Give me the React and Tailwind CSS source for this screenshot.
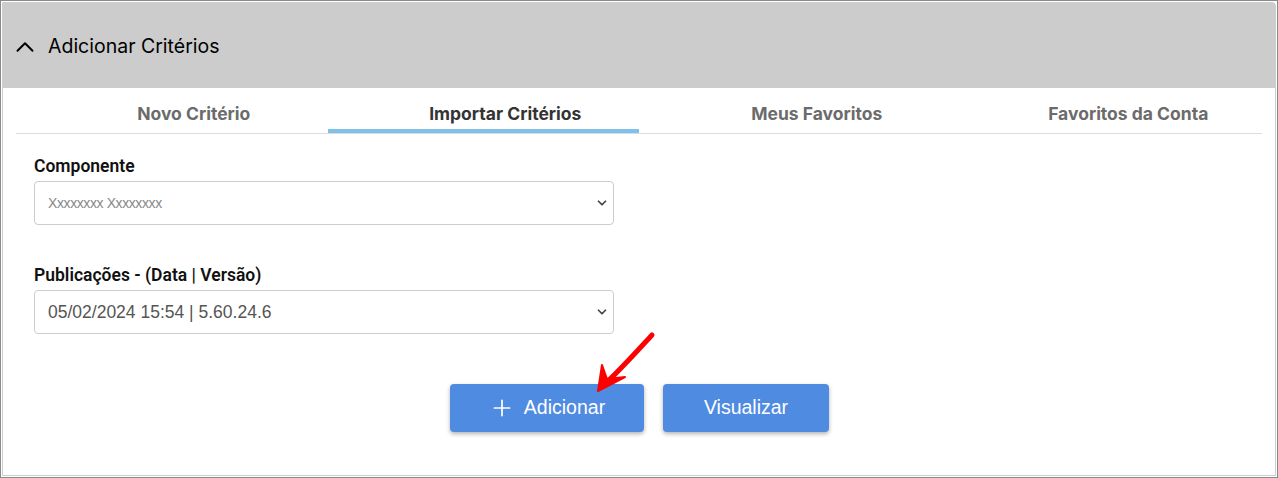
import { ChevronDown, ChevronUp, Plus } from 'lucide-react'

const tabs = [
  { label: 'Novo Critério' },
  { label: 'Importar Critérios', active: true },
  { label: 'Meus Favoritos' },
  { label: 'Favoritos da Conta' },
]

function Field({ label, value, placeholder }) {
  return (
    <div className="flex flex-col">
      <label className="h-[22px] text-[17.5px] leading-[22px] font-semibold text-[#111] font-['Roboto',sans-serif]">{label}</label>
      <div className="mt-[4px] flex h-[44px] w-[580px] items-center justify-between rounded-[4px] border border-[#cccccc] bg-white pl-[13px] pr-[4px]">
        {placeholder ? (
          <span className="text-[14px] tracking-[-0.4px] text-[#888] font-['Liberation_Sans',Arial,sans-serif]">{placeholder}</span>
        ) : (
          <span className="text-[17.5px] text-[#555] font-['Liberation_Sans',Arial,sans-serif]">{value}</span>
        )}
        <ChevronDown size={14} strokeWidth={3} className="text-[#444]" />
      </div>
    </div>
  )
}

export default function App() {
  return (
    <div className="relative h-[478px] w-[1278px] border border-[#8a8a8a] bg-white p-px">
      <div className="flex h-full flex-col rounded-tr-[4px] border border-[#cdcdcd] bg-white">
        <div className="flex h-[85px] items-center gap-[8px] bg-[#cccccc] pl-[7px] pt-[2px] font-['Inter',sans-serif]">
          <ChevronUp size={30} strokeWidth={1.6} className="text-black" />
          <span className="text-[19.5px] text-black">Adicionar Critérios</span>
        </div>

        <div className="mx-[13px] flex border-b border-[#dcdcdc] font-['Inter',sans-serif]">
          {tabs.map((tab) => (
            <div
              key={tab.label}
              className={`flex h-[45px] flex-1 items-center justify-center border-b-[4px] pl-[44px] pt-[11px] text-[17.5px] font-bold ${tab.active ? 'border-[#80c1ec] text-[#333]' : 'border-transparent text-[#6b6b6b]'}`}
            >
              {tab.label}
            </div>
          ))}
        </div>

        <div className="flex flex-col pl-[31px] pt-[21px]">
          <Field label="Componente" placeholder="Xxxxxxxx Xxxxxxxx" />
          <div className="h-[39px]" />
          <Field label="Publicações - (Data | Versão)" value="05/02/2024 15:54 | 5.60.24.6" />
        </div>

        <div className="mt-[50px] flex justify-center gap-[19px] pl-[1px] font-['Liberation_Sans',Arial,sans-serif]">
          <button className="flex h-[48px] w-[194px] items-center justify-center gap-[9px] rounded-[4px] bg-[#508be2] text-[19.5px] text-white shadow-[0_2px_4px_rgba(0,0,0,0.3)]">
            <Plus size={26} strokeWidth={1.6} />
            Adicionar
          </button>
          <button className="flex h-[48px] w-[166px] items-center justify-center rounded-[4px] bg-[#508be2] text-[19.5px] text-white shadow-[0_2px_4px_rgba(0,0,0,0.3)]">
            Visualizar
          </button>
        </div>
      </div>

      <svg className="absolute left-[590px] top-[328px]" width="70" height="68" viewBox="0 0 70 68">
        <path d="M61 6 C48 20 32 38 14 55" stroke="#ff0000" strokeWidth="5" fill="none" strokeLinecap="round" />
        <path d="M7 62 L11 36 L16 50 L34 48 Z" fill="#ff0000" stroke="#ff0000" strokeWidth="2" strokeLinejoin="round" />
      </svg>
    </div>
  )
}
